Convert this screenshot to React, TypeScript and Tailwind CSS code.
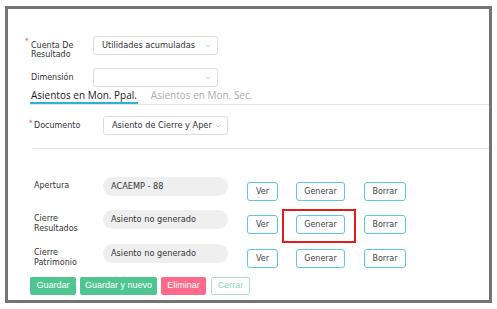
import { ChevronDown } from 'lucide-react';

const label = 'font-["DejaVu_Sans",sans-serif] text-[8px] text-[#333]';
const value = 'font-["DejaVu_Sans",sans-serif] text-[8.2px] text-[#333]';

function Req() {
  return <span className="text-[#e53935] text-[7px] leading-none relative -top-[3px] w-[6px] inline-block">*</span>;
}

function Select({ text, width }: { text?: string; width: string }) {
  return (
    <div className={`${width} h-[19px] border border-[#dedede] rounded-[3px] bg-white flex items-center pl-[8px] pr-[5px]`}>
      <span className={`${value} flex-1 whitespace-nowrap`}>{text}</span>
      <ChevronDown className="w-[8px] h-[8px] text-[#9cbcd0]" strokeWidth={2} />
    </div>
  );
}

function OutlineBtn({ text, width }: { text: string; width: string }) {
  return (
    <div className={`${width} h-[19px] border border-[#5cc9e2] rounded-[3px] bg-white flex items-center justify-center ${label} text-[#444]`}>
      {text}
    </div>
  );
}

function AsientoRow({ lines, text, highlight, h }: { lines: string[]; text: string; highlight?: boolean; h: string }) {
  return (
    <div className={`flex items-start ${h}`}>
      <div className={`w-[70px] mt-[4px] pl-[1px] leading-[10px] ${label}`}>
        {lines.map((l) => (
          <div key={l}>{l}</div>
        ))}
      </div>
      <div className={`w-[125px] h-[19px] rounded-full bg-[#efefef] flex items-center pl-[8px] ${value}`}>{text}</div>
      <div className="ml-[19px] mt-[5px] flex gap-[18px]">
        <OutlineBtn text="Ver" width="w-[31px]" />
        <div className="relative">
          <OutlineBtn text="Generar" width="w-[49px]" />
          {highlight && (
            <div className="absolute -left-[14px] -top-[6px] w-[74px] h-[34px] border-2 border-[#e21b1b]" />
          )}
        </div>
        <div className="ml-px">
          <OutlineBtn text="Borrar" width="w-[42px]" />
        </div>
      </div>
    </div>
  );
}

export default function App() {
  return (
    <div className="w-[497px] h-[309px] bg-white pt-[6px] pl-[5px]">
      <div className="w-[487px] h-[297px] border-[3px] border-[#747474] bg-white pt-[27px] pl-[17px]">
        {/* Cabecera */}
        <div className="flex items-start">
          <div className={`w-[68px] mt-[5px] flex ${label} leading-[9px]`}>
            <Req />
            <div>
              Cuenta De
              <br />
              Resultado
            </div>
          </div>
          <Select text="Utilidades acumuladas" width="w-[125px]" />
        </div>
        <div className="flex items-center mt-[9px]">
          <div className={`w-[68px] pl-[6px] ${label}`}>Dimensión</div>
          <Select width="w-[125px]" />
        </div>

        {/* Tabs */}
        <div className="ml-[5px] mt-[2px] flex gap-[13px] border-b border-[#e3e3e3] font-['Open_Sans',sans-serif] text-[10px] leading-[13px]">
          <div className="px-[1px] border-b-2 border-[#2cb2d6] text-[#222] font-medium">Asientos en Mon. Ppal.</div>
          <div className="text-[#ababab]">Asientos en Mon. Sec.</div>
        </div>

        <div className="ml-[8px]">
          <div className="flex items-center mt-[11px]">
            <div className={`w-[70px] flex ${label}`}>
              <span className="-ml-[4px]">
                <Req />
              </span>
              <span className="-ml-[1px]">Documento</span>
            </div>
            <Select text="Asiento de Cierre y Aper" width="w-[125px]" />
          </div>

          <div className="mt-[13px] h-px bg-[#e3e3e3]" />

          <div className="mt-[28px]">
            <AsientoRow lines={['Apertura']} text="ACAEMP - 88" h="h-[33px]" />
            <AsientoRow lines={['Cierre', 'Resultados']} text="Asiento no generado" highlight h="h-[34px]" />
            <AsientoRow lines={['Cierre', 'Patrimonio']} text="Asiento no generado" h="h-[33px]" />
          </div>

          <div className="-ml-[3px] flex gap-[4px] font-['Liberation_Sans',sans-serif] text-[9px]">
            <div className="w-[46px] h-[18px] rounded-[2px] bg-[#4fc592] text-white flex items-center justify-center">Guardar</div>
            <div className="w-[77px] h-[18px] rounded-[2px] bg-[#4fc592] text-white flex items-center justify-center">Guardar y nuevo</div>
            <div className="w-[45px] h-[18px] rounded-[2px] bg-[#fd6a8a] text-white flex items-center justify-center">Eliminar</div>
            <div className="ml-px w-[39px] h-[18px] rounded-[2px] border border-[#a8e2c8] bg-white text-[#8fd3b3] flex items-center justify-center">Cerrar</div>
          </div>
        </div>
      </div>
    </div>
  );
}
